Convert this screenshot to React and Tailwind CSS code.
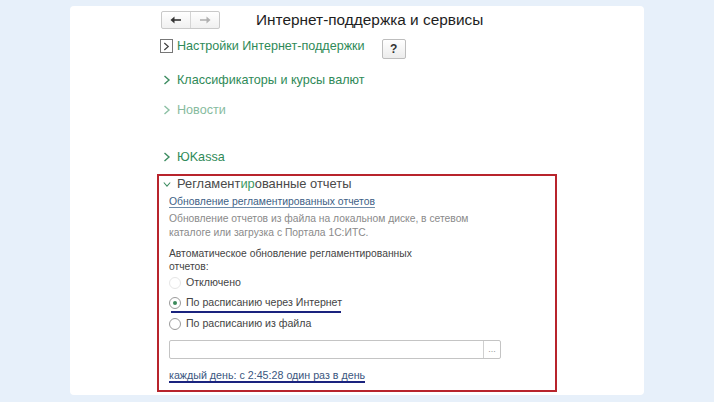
const font = { fontFamily: '"Liberation Sans", Arial, sans-serif' };

const Chevron = ({ className = '' }) => (
  <svg viewBox="0 0 8 10" className={className} fill="none">
    <path d="M1.5 1 L6 5 L1.5 9" stroke="currentColor" strokeWidth="1.4" />
  </svg>
);

const SectionLink = ({ label, faded = false, className = '' }) => (
  <div className={`flex items-center h-[18px] ml-[6px] ${className}`}>
    <Chevron className={`w-[8px] h-[10px] ${faded ? 'text-[#8cc0a4]' : 'text-[#3c8c60]'}`} />
    <span className={`ml-[6px] text-[12.6px] ${faded ? 'text-[#86bb9e]' : 'text-[#2f8a58]'}`}>{label}</span>
  </div>
);

const Radio = ({ label, checked = false, faded = false }) => (
  <div className="flex items-center h-[16px]">
    <span
      className={`w-[12px] h-[12px] rounded-full border flex items-center justify-center bg-white ${
        faded ? 'border-[#e6e6e6]' : 'border-[#9a9a9a]'
      }`}
    >
      {checked && <span className="w-[4px] h-[4px] rounded-full bg-[#3b8a5a]" />}
    </span>
    <span className="ml-[5px] text-[10.6px] text-[#444]">{label}</span>
  </div>
);

export default function App() {
  return (
    <div className="w-[714px] h-[402px] bg-[#e7f0fa] pt-[6px] pl-[70px]" style={font}>
      <div className="w-[574px] h-[389px] bg-white rounded-[4px] pt-[5px] pl-[87px]">
        {/* header */}
        <div className="flex items-center h-[18px] ml-[4px]">
          <div className="flex h-[18px] w-[59px] border border-[#c9c9c9] rounded-[2px] bg-gradient-to-b from-white to-[#f0f0f0]">
            <div className="flex-1 flex items-center justify-center border-r border-[#d5d5d5]">
              <svg viewBox="0 0 12 8" className="w-[12px] h-[8px]">
                <path d="M11 4 H2.5" stroke="#333" strokeWidth="1.6" />
                <path d="M0.5 4 L4.5 0.5 V7.5 Z" fill="#333" />
              </svg>
            </div>
            <div className="flex-1 flex items-center justify-center">
              <svg viewBox="0 0 12 8" className="w-[12px] h-[8px]">
                <path d="M1 4 H9.5" stroke="#b0b0b0" strokeWidth="1.6" />
                <path d="M11.5 4 L7.5 0.5 V7.5 Z" fill="#b0b0b0" />
              </svg>
            </div>
          </div>
          <h1 className="ml-[36px] text-[15.4px] text-[#1e1e1e] leading-none">Интернет-поддержка и сервисы</h1>
        </div>

        {/* settings row */}
        <div className="flex items-center mt-[7px] ml-[3px] h-[20px]">
          <span className="w-[13px] h-[14px] border border-[#777] flex items-center justify-center">
            <Chevron className="w-[7px] h-[9px] text-[#444]" />
          </span>
          <span className="ml-[4px] text-[12.6px] text-[#2f8a58]">Настройки Интернет-поддержки</span>
          <button className="ml-[17px] mt-[6px] w-[24px] h-[20px] border border-[#bdbdbd] rounded-[2px] bg-gradient-to-b from-white to-[#ececec] text-[12px] font-bold text-[#333] flex items-center justify-center">
            ?
          </button>
        </div>

        <SectionLink label="Классификаторы и курсы валют" className="mt-[15px]" />
        <SectionLink label="Новости" faded className="mt-[12px]" />
        <SectionLink label="ЮKassa" className="mt-[29px]" />

        {/* red box */}
        <div className="mt-[8px] w-[400px] h-[218px] border-2 border-[#b8242c] pl-[10px]">
          <div className="flex items-center h-[16px] -ml-[6px]">
            <svg viewBox="0 0 10 8" className="w-[8px] h-[7px] text-[#3c8c60]" fill="none">
              <path d="M1 1.5 L5 6 L9 1.5" stroke="currentColor" strokeWidth="1.3" />
            </svg>
            <span className="ml-[6px] text-[12.9px] text-[#4a4a4a]">
              Регламент<span className="text-[#3c9a64]">ир</span>ованные отчеты
            </span>
          </div>
          <div className="mt-[2px] h-[15px] text-[10.4px] leading-[15px] text-[#3e5f86] underline underline-offset-2 decoration-[#6d8aa8]">
            Обновление регламентированных отчетов
          </div>
          <p className="mt-[3px] w-[320px] text-[10.3px] leading-[14px] text-[#8a8a8a]">
            Обновление отчетов из файла на локальном диске, в сетевом каталоге или загрузка с Портала 1С:ИТС.
          </p>
          <p className="mt-[7px] w-[256px] text-[10.3px] leading-[13px] text-[#444]">
            Автоматическое обновление регламентированных отчетов:
          </p>
          <div className="mt-[2px] flex flex-col gap-[4px]">
            <Radio label="Отключено" faded />
            <div>
              <Radio label="По расписанию через Интернет" checked />
              <div className="ml-[2px] w-[170px] h-[2px] bg-[#1a237e]" />
            </div>
            <div className="-mt-[1px]">
              <Radio label="По расписанию из файла" />
            </div>
          </div>
          <div className="mt-[8px] flex w-[332px] h-[19px] border border-[#c4c4c4] rounded-[2px] bg-white">
            <div className="flex-1" />
            <div className="w-[17px] border-l border-[#d0d0d0] flex items-center justify-center text-[9px] text-[#999] leading-none">
              ...
            </div>
          </div>
          <div className="mt-[10px] inline-block text-[10.7px] text-[#3a5680] leading-[12px] border-b-2 border-[#1a237e]">
            каждый день: с 2:45:28 один раз в день
          </div>
        </div>
      </div>
    </div>
  );
}
